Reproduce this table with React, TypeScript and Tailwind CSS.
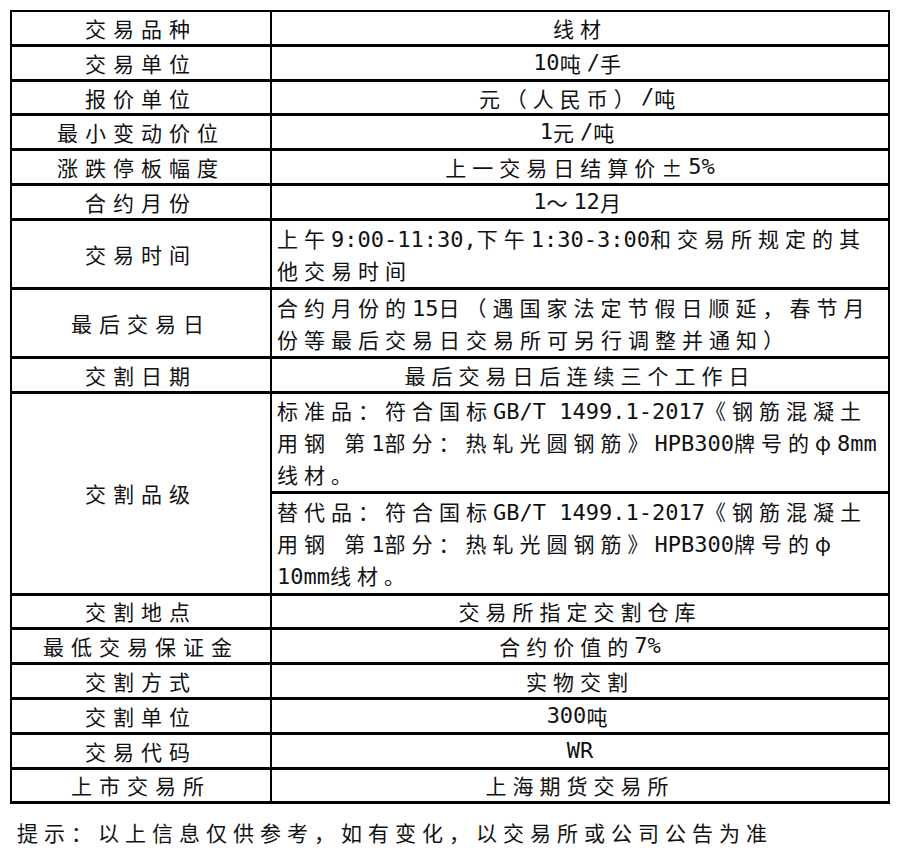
import type { ReactNode } from "react"

// ascii runs get a half-width mono face, the rest stays in the CJK face
const ASCII = /([\x20-\x7E]+)/

function Txt({ s }: { s: string }) {
  return (
    <>
      {s.split(ASCII).map((part, i) =>
        i % 2 === 1 ? (
          <span key={i} className="font-['DejaVu_Sans_Mono',monospace] text-[22px] tracking-normal leading-none">
            {part}
          </span>
        ) : (
          part
        )
      )}
    </>
  )
}

function Lines({ lines }: { lines: string[] }) {
  return (
    <div className="flex-1 flex flex-col justify-center pl-[5px] tracking-[6px] leading-[32px] whitespace-nowrap">
      {lines.map((l, i) => (
        <div key={i}>
          <Txt s={l} />
        </div>
      ))}
    </div>
  )
}

function Label({ children }: { children: ReactNode }) {
  return (
    <div className="w-[260px] shrink-0 border-r-2 border-black flex items-center justify-center tracking-[7px] leading-[32px]">
      {children}
    </div>
  )
}

function Row({ name, value }: { name: string; value: string }) {
  return (
    <div className="flex h-[34.8px] border-b-[3px] border-black">
      <Label>{name}</Label>
      <div className="flex-1 flex items-center justify-center tracking-[6px] leading-[32px]">
        <Txt s={value} />
      </div>
    </div>
  )
}

export default function App() {
  return (
    <div className="bg-white w-[900px] h-[857px] pt-[10px] pl-[10px] text-[#111111] text-[21px] font-['Noto_Sans_CJK_SC',sans-serif]">
      <div className="w-[880px] border-x-2 border-t-2 border-black">
        <Row name="交易品种" value="线材" />
        <Row name="交易单位" value="10吨/手" />
        <Row name="报价单位" value="元（人民币）/吨" />
        <Row name="最小变动价位" value="1元/吨" />
        <Row name="涨跌停板幅度" value="上一交易日结算价±5%" />
        <Row name="合约月份" value="1～12月" />

        <div className="flex h-[69px] border-b-[3px] border-black">
          <Label>交易时间</Label>
          <Lines lines={["上午9:00-11:30,下午1:30-3:00和交易所规定的其", "他交易时间"]} />
        </div>
        <div className="flex h-[69px] border-b-[3px] border-black">
          <Label>最后交易日</Label>
          <Lines lines={["合约月份的15日（遇国家法定节假日顺延，春节月", "份等最后交易日交易所可另行调整并通知）"]} />
        </div>

        <Row name="交割日期" value="最后交易日后连续三个工作日" />

        <div className="flex border-b-[3px] border-black">
          <Label>交割品级</Label>
          <div className="flex-1 flex flex-col">
            <div className="flex h-[100px] border-b-[3px] border-black">
              <Lines
                lines={[
                  "标准品：符合国标GB/T 1499.1-2017《钢筋混凝土",
                  "用钢 第1部分：热轧光圆钢筋》HPB300牌号的φ8mm",
                  "线材。",
                ]}
              />
            </div>
            <div className="flex h-[99px]">
              <Lines
                lines={[
                  "替代品：符合国标GB/T 1499.1-2017《钢筋混凝土",
                  "用钢 第1部分：热轧光圆钢筋》HPB300牌号的φ",
                  "10mm线材。",
                ]}
              />
            </div>
          </div>
        </div>

        <Row name="交割地点" value="交易所指定交割仓库" />
        <Row name="最低交易保证金" value="合约价值的7%" />
        <Row name="交割方式" value="实物交割" />
        <Row name="交割单位" value="300吨" />
        <Row name="交易代码" value="WR" />
        <Row name="上市交易所" value="上海期货交易所" />
      </div>
      <p className="mt-[12px] pl-[7px] leading-[32px] tracking-[6px]">
        提示：以上信息仅供参考，如有变化，以交易所或公司公告为准
      </p>
    </div>
  )
}
